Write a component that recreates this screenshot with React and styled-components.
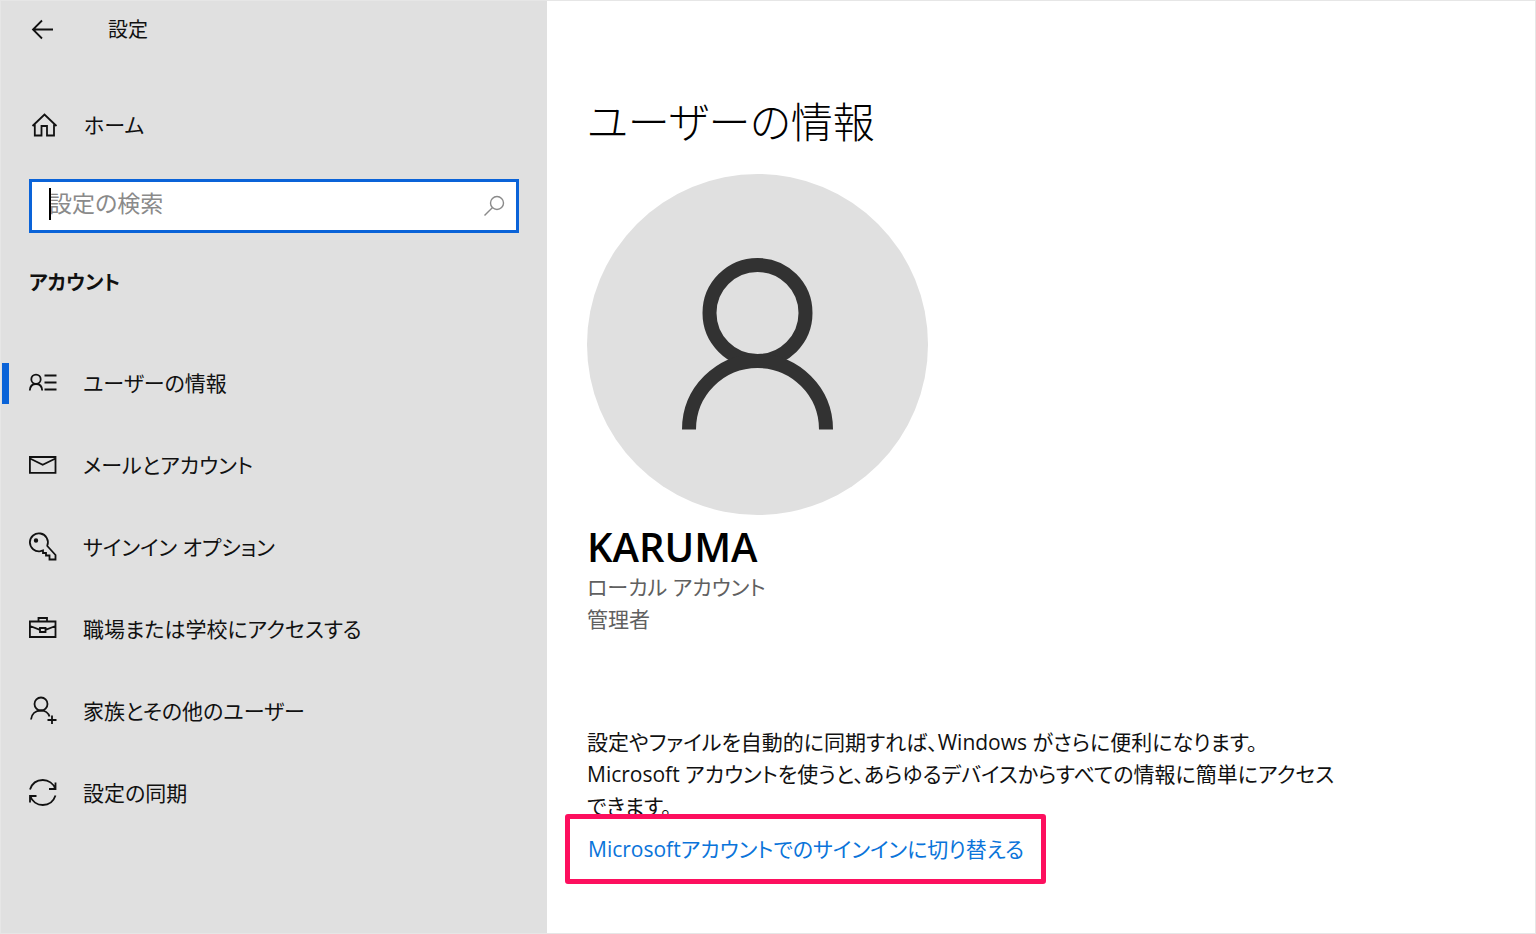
import { useState } from "react"
import styled, { createGlobalStyle } from "styled-components"

const navItems = [
  { id: "info", label: "ユーザーの情報", icon: <InfoIcon /> },
  { id: "mail", label: "メールとアカウント", icon: <MailIcon /> },
  { id: "signin", label: "サインイン オプション", icon: <KeyIcon /> },
  { id: "work", label: "職場または学校にアクセスする", icon: <BriefcaseIcon /> },
  { id: "family", label: "家族とその他のユーザー", icon: <FamilyIcon /> },
  { id: "sync", label: "設定の同期", icon: <SyncIcon /> },
]

function App() {
  const [active, setActive] = useState("info")
  const [query, setQuery] = useState("")

  return (
    <>
      <GlobalStyle />
      <Window>
        <Sidebar>
          <TitleBar>
            <BackButton aria-label="戻る"><BackIcon /></BackButton>
            <span>設定</span>
          </TitleBar>
          <HomeLink href="#home">
            <HomeIcon />
            <span>ホーム</span>
          </HomeLink>
          <SearchBox>
            {query === "" && <Caret />}
            <SearchInput
              aria-label="設定の検索"
              placeholder="設定の検索"
              value={query}
              onChange={(e) => setQuery(e.target.value)}
            />
            <SearchIcon />
          </SearchBox>
          <GroupTitle>アカウント</GroupTitle>
          <Nav>
            {navItems.map((item) => (
              <NavButton
                key={item.id}
                $active={active === item.id}
                onClick={() => setActive(item.id)}
              >
                {item.icon}
                <span>{item.label}</span>
              </NavButton>
            ))}
          </Nav>
        </Sidebar>
        <Content>
          <PageTitle>ユーザーの情報</PageTitle>
          <Avatar viewBox="0 0 341 341" aria-hidden="true">
            <circle cx="170.5" cy="170.5" r="170.5" fill="#e0e0e0" />
            <circle cx="170.5" cy="139" r="48" />
            <path d="M102 255.500a68.500 68.500 0 0 1 137 0" />
          </Avatar>
          <UserName>KARUMA</UserName>
          <UserMeta>ローカル アカウント</UserMeta>
          <UserMeta>管理者</UserMeta>
          <Description>
            設定やファイルを自動的に同期すれば、Windows がさらに便利になります。<br />
            Microsoft アカウントを使うと、あらゆるデバイスからすべての情報に簡単にアクセス<br />
            できます。
          </Description>
          <SwitchLink href="#switch">Microsoftアカウントでのサインインに切り替える</SwitchLink>
        </Content>
      </Window>
    </>
  )
}

function BackIcon() {
  return (
    <Icon viewBox="0 0 28 28">
      <path d="M25 13.500H5M14 4.500L5 13.500L14 22.500" />
    </Icon>
  )
}

function HomeIcon() {
  return (
    <Icon viewBox="0 0 28 28">
      <path d="M3.500 15L15.500 3.500L27.500 15M5.800 13.500V24.500H12.500V15H18V24.500H25V13.500" />
    </Icon>
  )
}

function SearchIcon() {
  return (
    <Icon viewBox="0 0 28 28" $color="#8a8a8a" $thin>
      <circle cx="17" cy="11" r="6.500" />
      <path d="M12.300 15.700L4.500 23.500" />
    </Icon>
  )
}

function InfoIcon() {
  return (
    <Icon viewBox="0 0 28 28">
      <circle cx="7" cy="10.300" r="4.700" />
      <path d="M.8 21.500C1 17.500 3.500 15 7 15S13 17.500 13.200 21.500M15.500 6.500H27.500M15.500 13.500H27.500M15.500 20.500H27.500" />
    </Icon>
  )
}

function MailIcon() {
  return (
    <Icon viewBox="0 0 28 28">
      <path d="M.9 6H26.500V21.900H.9ZM1 7.500L13.700 13.800L26.500 7.500" />
    </Icon>
  )
}

function KeyIcon() {
  return (
    <Icon viewBox="0 0 28 28">
      <path d="M18.300 12.500A9 9 0 1 0 11.500 18.200L14 17.500V20H17V22.500H20.500V26.500H26.500V22L18.300 13Z" />
      <circle cx="7" cy="7.500" r="1.300" fill="#111" />
    </Icon>
  )
}

function BriefcaseIcon() {
  return (
    <Icon viewBox="0 0 28 28">
      <path d="M.9 6.500H26.500V22H.9ZM9.500 6.500V3H18V6.500M1 11L11 14.800M16.500 14.800L26.500 11M11 13H16.500V17H11Z" />
    </Icon>
  )
}

function FamilyIcon() {
  return (
    <Icon viewBox="0 0 28 28">
      <circle cx="12" cy="7" r="6.500" />
      <path d="M2 22.500C2.500 17 6.500 13.500 12 13.500C16 13.500 19.500 16 20.500 19.500M23 18.500V27M18.500 23H27.500" />
    </Icon>
  )
}

function SyncIcon() {
  return (
    <Icon viewBox="0 0 28 28">
      <path d="M1 10.500C3 4.500 8 1 13.800 1C19.500 1 24.500 4.500 26 9.500M26.500 3.500V10H20M26.500 16.500C24.500 22.500 19.500 26 13.800 26C8 26 3 22.500 1.500 17.500M1 23.500V17H7.500" />
    </Icon>
  )
}

const GlobalStyle = createGlobalStyle`
*{
  box-sizing:border-box;
}
body{
  margin:0;
  background:#fff;
  color:#111;
  font-family:"Open Sans","Noto Sans CJK JP",sans-serif;
  font-size:21px;
  line-height:32px;
  font-feature-settings:"palt";
}
button,input{
  font:inherit;
  color:inherit;
  font-feature-settings:inherit;
}
`

const Window = styled.div`
display:grid;
grid-template-columns:minmax(320px,546px) minmax(0,1fr);
min-height:100vh;
border:1px solid #e6e6e6;
`

const Sidebar = styled.aside`
display:flex;
flex-direction:column;
background:#e0e0e0;
`

const TitleBar = styled.header`
display:flex;
align-items:center;
gap:52px;
height:57px;
padding-left:27px;
font-size:20px;
`

const BackButton = styled.button`
display:flex;
padding:0;
border:0;
background:none;
`

const HomeLink = styled.a`
display:flex;
align-items:center;
gap:27px;
height:64px;
margin-top:35px;
padding-left:28px;
color:inherit;
text-decoration:none;
`

const SearchBox = styled.div`
position:relative;
display:flex;
align-items:center;
height:54px;
margin:22px 28px 0;
padding:0 8px 0 17px;
border:3px solid #0a63d8;
background:#fff;
`

const Caret = styled.span`
position:absolute;
left:17px;
top:6px;
width:2px;
height:32px;
background:#000;
`

const SearchInput = styled.input`
flex:1;
min-width:0;
padding:0 0 6px;
border:0;
outline:0;
background:none;
font-size:23px;
&::placeholder{
  color:#8a8a8a;
  opacity:1;
}
`

const GroupTitle = styled.h2`
margin:32px 28px 0;
font-size:20px;
line-height:36px;
font-weight:700;
`

const Nav = styled.nav`
display:flex;
flex-direction:column;
margin-top:41px;
`

const NavButton = styled.button`
position:relative;
display:flex;
align-items:center;
gap:26px;
height:82px;
padding:0 28px;
border:0;
background:none;
text-align:left;
&::before{
  content:"";
  display:${(props) => (props.$active ? "block" : "none")};
  position:absolute;
  left:1px;
  top:21px;
  width:7px;
  height:41px;
  background:#0a63d8;
}
`

const Icon = styled.svg.attrs({ "aria-hidden": true })`
flex:none;
width:28px;
height:28px;
overflow:visible;
fill:none;
stroke:${(props) => props.$color || "#111"};
stroke-width:${(props) => (props.$thin ? 1.4 : 1.8)};
`

const Content = styled.main`
display:flex;
flex-direction:column;
align-items:flex-start;
padding:89px 40px 40px;
`

const PageTitle = styled.h1`
margin:0;
font-size:42px;
line-height:64px;
font-weight:300;
color:#000;
`

const Avatar = styled.svg`
width:341px;
height:341px;
margin-top:20px;
fill:none;
stroke:#323232;
stroke-width:14;
circle:first-child{
  stroke:none;
}
`

const UserName = styled.h2`
margin:8px 0 0;
font-size:40px;
line-height:48px;
font-weight:600;
color:#000;
`

const UserMeta = styled.p`
margin:0;
color:#606060;
`

const Description = styled.p`
margin:91px 0 0;
`

const SwitchLink = styled.a`
margin:-8px 0 0 -22px;
padding:14px 17px 14px 18px;
border:5px solid #fd0f5e;
border-radius:3px;
color:#0a74da;
text-decoration:none;
`

export default App
